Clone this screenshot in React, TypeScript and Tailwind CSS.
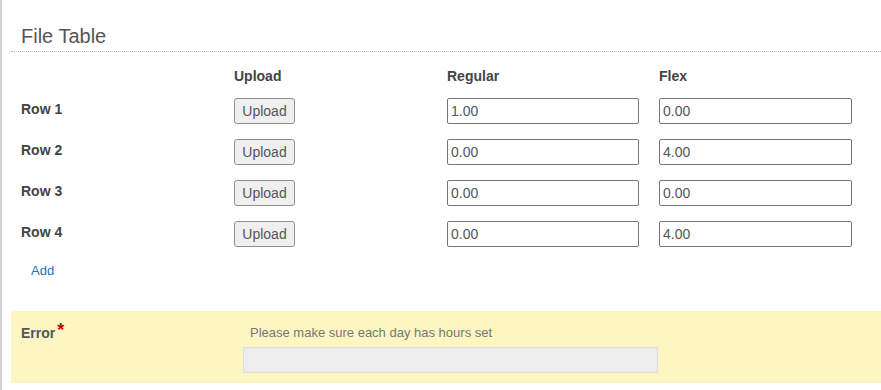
import { useState } from "react";

const rows = [
  { name: "Row 1", regular: "1.00", flex: "0.00" },
  { name: "Row 2", regular: "0.00", flex: "4.00" },
  { name: "Row 3", regular: "0.00", flex: "0.00" },
  { name: "Row 4", regular: "0.00", flex: "4.00" },
];

const App = () => {
  const [data, setData] = useState(rows);

  const update = (i: number, key: "regular" | "flex", value: string) => {
    setData((d) => d.map((r, idx) => (idx === i ? { ...r, [key]: value } : r)));
  };

  return (
    <div className="min-h-[390px] w-[881px] overflow-hidden bg-white font-['Liberation_Sans',Arial,sans-serif] border-l-2 border-[#d3d3d3]">
      <div className="pl-[9px]">
        {/* Heading */}
        <h2 className="mt-[24px] pb-[3px] pl-[10px] text-[20px] leading-[24px] font-normal text-[#555] border-b border-dotted border-[#bbb]">
          File Table
        </h2>

        {/* Table */}
        <div className="pl-[10px] mt-[16px]">
          <div className="grid grid-cols-[213px_213px_212px_193px] text-[14px] leading-[16px] font-bold text-[#444]">
            <div />
            <div>Upload</div>
            <div>Regular</div>
            <div>Flex</div>
          </div>

          <div className="mt-[14px] flex flex-col gap-[15px]">
            {data.map((row, i) => (
              <div
                key={row.name}
                className="grid grid-cols-[213px_213px_212px_193px] items-center h-[26px]"
              >
                <div className="-mt-[3px] text-[14px] font-bold text-[#444]">{row.name}</div>
                <div>
                  <button className="h-[26px] w-[61px] rounded-[3px] border border-[#8f8f8f] bg-[#efefef] text-[14px] text-[#555]">
                    Upload
                  </button>
                </div>
                <div>
                  <input
                    value={row.regular}
                    onChange={(e) => update(i, "regular", e.target.value)}
                    className="h-[26px] w-[192px] rounded-[2px] border border-[#767676] px-[3px] text-[14px] text-[#555] outline-none"
                  />
                </div>
                <div>
                  <input
                    value={row.flex}
                    onChange={(e) => update(i, "flex", e.target.value)}
                    className="h-[26px] w-[193px] rounded-[2px] border border-[#767676] px-[3px] text-[14px] text-[#555] outline-none"
                  />
                </div>
              </div>
            ))}
          </div>

          <a href="#" className="mt-[16px] ml-[10px] block w-fit text-[13px] leading-[16px] text-[#1a6fc4]">
            Add
          </a>
        </div>

        {/* Error panel */}
        <div className="mt-[32px] flex bg-[#fdf6c2] pl-[10px] pt-[14px] pb-[10px]">
          <div className="w-[222px] text-[14px] leading-[16px] font-bold text-[#555]">
            Error
            <span className="relative -top-[2px] ml-[2px] text-[18px] leading-[0] text-[#c00]">*</span>
          </div>
          <div className="flex flex-col">
            <div className="pl-[7px] text-[13px] leading-[16px] text-[#777]">
              Please make sure each day has hours set
            </div>
            <div className="mt-[6px] h-[26px] w-[415px] border border-[#ddd] bg-[#ededed]" />
          </div>
        </div>
      </div>
    </div>
  );
};

export default App;
